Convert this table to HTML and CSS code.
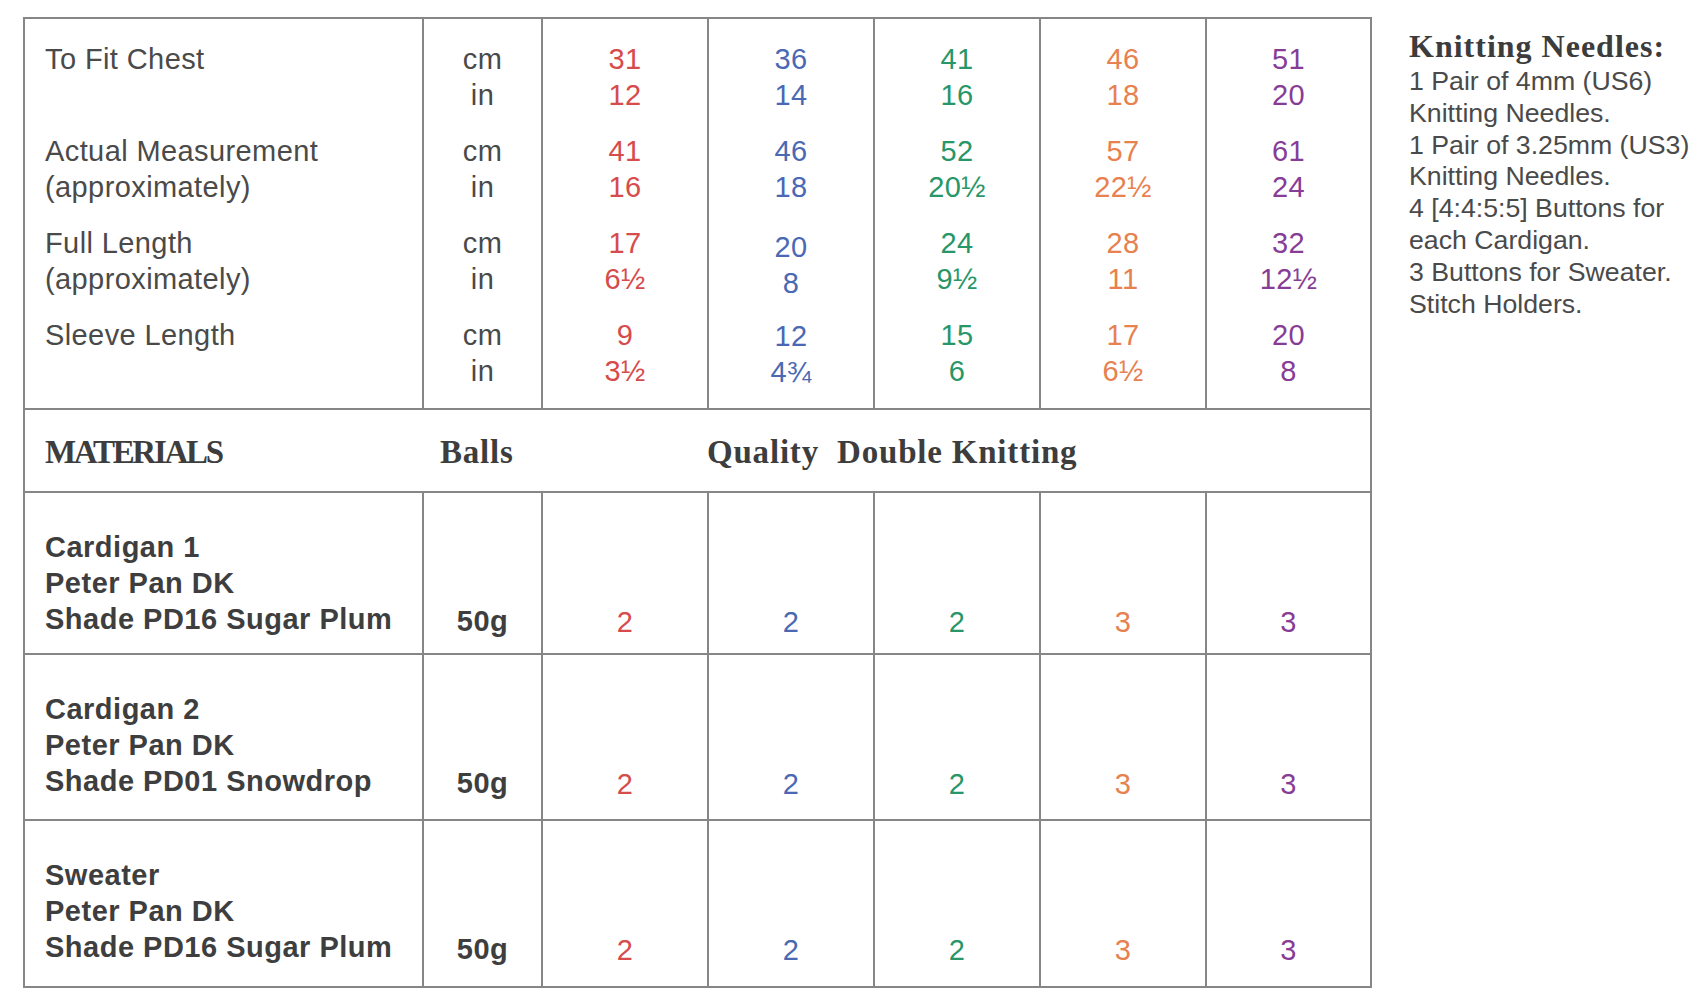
FILE: index.html
```html
<!DOCTYPE html>
<html lang="en">
<head>
<meta charset="utf-8">
<title>Sizes and Materials</title>
<link rel="stylesheet" href="styles.css">
</head>
<body>
<div class="page">
  <table class="chart">
    <colgroup>
      <col class="c-label"><col class="c-unit"><col class="c-size"><col class="c-size"><col class="c-size"><col class="c-size"><col class="c-last">
    </colgroup>
    <tbody>
      <tr class="measures">
        <td class="label">
          <div class="grp">To Fit Chest</div>
          <div class="grp">Actual Measurement<br>(approximately)</div>
          <div class="grp">Full Length<br>(approximately)</div>
          <div class="grp">Sleeve Length</div>
        </td>
        <td class="unit">
          <div class="grp">cm<br>in</div>
          <div class="grp">cm<br>in</div>
          <div class="grp">cm<br>in</div>
          <div class="grp">cm<br>in</div>
        </td>
        <td class="num red">
          <div class="grp">31<br>12</div>
          <div class="grp">41<br>16</div>
          <div class="grp">17<br>6½</div>
          <div class="grp">9<br>3½</div>
        </td>
        <td class="num blue">
          <div class="grp">36<br>14</div>
          <div class="grp">46<br>18</div>
          <div class="grp dn">20<br>8</div>
          <div class="grp dn1">12<br>4¾</div>
        </td>
        <td class="num green">
          <div class="grp">41<br>16</div>
          <div class="grp">52<br>20½</div>
          <div class="grp">24<br>9½</div>
          <div class="grp">15<br>6</div>
        </td>
        <td class="num orange">
          <div class="grp">46<br>18</div>
          <div class="grp">57<br>22½</div>
          <div class="grp">28<br>11</div>
          <div class="grp">17<br>6½</div>
        </td>
        <td class="num purple">
          <div class="grp">51<br>20</div>
          <div class="grp">61<br>24</div>
          <div class="grp">32<br>12½</div>
          <div class="grp">20<br>8</div>
        </td>
      </tr>
      <tr class="mat-head">
        <td class="mh mh-first">MATERIALS</td>
        <td class="mh mh-balls">Balls</td>
        <td class="mh mh-quality" colspan="5">Quality&nbsp; Double Knitting</td>
      </tr>
      <tr class="item item-1">
        <td class="name">Cardigan 1<br>Peter Pan DK<br>Shade PD16 Sugar Plum</td>
        <td class="wt">50g</td>
        <td class="num red">2</td>
        <td class="num blue">2</td>
        <td class="num green">2</td>
        <td class="num orange">3</td>
        <td class="num purple">3</td>
      </tr>
      <tr class="item item-2">
        <td class="name">Cardigan 2<br>Peter Pan DK<br>Shade PD01 Snowdrop</td>
        <td class="wt">50g</td>
        <td class="num red">2</td>
        <td class="num blue">2</td>
        <td class="num green">2</td>
        <td class="num orange">3</td>
        <td class="num purple">3</td>
      </tr>
      <tr class="item item-3">
        <td class="name">Sweater<br>Peter Pan DK<br>Shade PD16 Sugar Plum</td>
        <td class="wt">50g</td>
        <td class="num red">2</td>
        <td class="num blue">2</td>
        <td class="num green">2</td>
        <td class="num orange">3</td>
        <td class="num purple">3</td>
      </tr>
    </tbody>
  </table>
  <aside class="notes">
    <h2>Knitting Needles:</h2>
    <p>1 Pair of 4mm (US6)<br>Knitting Needles.</p>
    <p>1 Pair of 3.25mm (US3)<br>Knitting Needles.</p>
    <p>4 [4:4:5:5] Buttons for<br>each Cardigan.</p>
    <p>3 Buttons for Sweater.</p>
    <p>Stitch Holders.</p>
  </aside>
</div>
</body>
</html>
```
FILE: styles.css
```css
html, body {
  margin: 0;
  padding: 0;
  background: #ffffff;
}

.page {
  display: flex;
  align-items: flex-start;
  gap: 37px;
  padding: 17px 0 0 23px;
}

.chart {
  flex: none;
  border-collapse: collapse;
  table-layout: fixed;
  width: 1349px;
  font-family: "Liberation Sans", Arial, sans-serif;
  font-size: 29px;
  letter-spacing: 0.4px;
  color: #4a4a4a;
}

.c-label { width: 399px; }
.c-unit { width: 119px; }
.c-size { width: 166px; }
.c-last { width: 165px; }

.chart td {
  border: 2px solid #868686;
  padding: 0;
  vertical-align: top;
}

/* measurement block */
.measures td {
  padding-top: 22px;
  padding-bottom: 19px;
  line-height: 36px;
}

.measures .label {
  padding-left: 20px;
  white-space: nowrap;
}

.grp {
  height: 72px;
}

.grp + .grp {
  margin-top: 20px;
}

.grp.dn {
  padding-top: 4px;
  height: 68px;
}

.grp.dn1 {
  padding-top: 1px;
  height: 71px;
}

.unit,
.num {
  text-align: center;
}

.red { color: #d64b4b; }
.blue { color: #4a68b3; }
.green { color: #279668; }
.orange { color: #e7814f; }
.purple { color: #873d96; }

/* materials header */
.mat-head td {
  font-family: "Liberation Serif", "Times New Roman", serif;
  font-weight: bold;
  font-size: 33px;
  line-height: 40px;
  color: #3d3d3d;
  padding-top: 21.5px;
  padding-bottom: 19.5px;
  white-space: nowrap;
  border-left-style: none;
  border-right-style: none;
}

.mat-head .mh-first {
  border-left: 2px solid #868686;
  padding-left: 20px;
  letter-spacing: -2.3px;
}

.mat-head .mh-balls {
  padding-left: 17px;
  letter-spacing: 0.8px;
}

.mat-head .mh-quality {
  border-right: 2px solid #868686;
  padding-left: 165px;
  letter-spacing: 0.8px;
}

/* materials rows */
.item td {
  padding-top: 36px;
  line-height: 36px;
}

.item .name {
  padding-left: 20px;
  font-weight: bold;
  letter-spacing: 0.5px;
  color: #3e3e3e;
  white-space: nowrap;
}

.item .wt {
  padding-top: 110px;
  text-align: center;
  font-weight: bold;
  letter-spacing: 0.5px;
  color: #3e3e3e;
}

.item .num {
  padding-top: 111px;
}

.item-1 td { padding-bottom: 16px; }
.item-2 td { padding-bottom: 20px; }
.item-3 td { padding-bottom: 21px; }

.item .wt,
.item .num {
  padding-bottom: 0;
}

/* notes column */
.notes {
  flex: none;
  margin-top: 10px;
  font-family: "Liberation Sans", Arial, sans-serif;
  font-size: 26.7px;
  line-height: 31.8px;
  color: #4a4a4a;
  white-space: nowrap;
}

.notes h2 {
  margin: 0 0 1px;
  font-family: "Liberation Serif", "Times New Roman", serif;
  font-weight: bold;
  font-size: 32px;
  line-height: 38px;
  letter-spacing: 1px;
  color: #3c3c3c;
}

.notes p {
  margin: 0;
}
```
